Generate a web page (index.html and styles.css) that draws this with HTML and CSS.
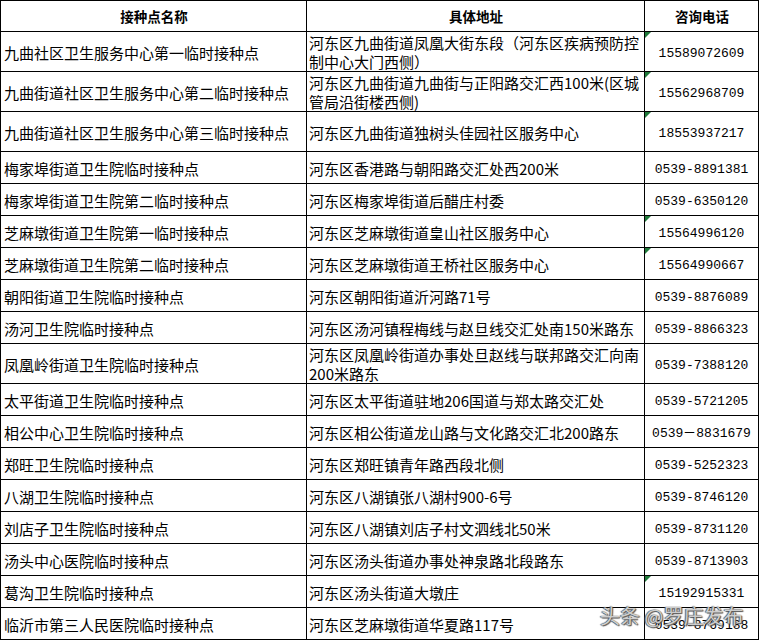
FILE: index.html
```html
<!DOCTYPE html>
<html lang="zh-CN">
<head>
<meta charset="utf-8">
<link rel="stylesheet" href="styles.css">
</head>
<body>
<div class="sheet">
<table class="grid">
<colgroup><col class="c-name"><col class="c-addr"><col class="c-tel"></colgroup>
<thead>
<tr class="head"><th>接种点名称</th><th>具体地址</th><th>咨询电话</th></tr>
</thead>
<tbody>
<tr class="tall"><td>九曲社区卫生服务中心第一临时接种点</td><td class="addr two">河东区九曲街道凤凰大街东段（河东区疾病预防控<br>制中心大门西侧）</td><td class="tel mark">15589072609</td></tr>
<tr class="tall"><td>九曲街道社区卫生服务中心第二临时接种点</td><td class="addr two">河东区九曲街道九曲街与正阳路交汇西100米(区城<br>管局沿街楼西侧)</td><td class="tel mark">15562968709</td></tr>
<tr class="tall"><td>九曲街道社区卫生服务中心第三临时接种点</td><td class="addr">河东区九曲街道独树头佳园社区服务中心</td><td class="tel mark">18553937217</td></tr>
<tr><td>梅家埠街道卫生院临时接种点</td><td class="addr">河东区香港路与朝阳路交汇处西200米</td><td class="tel">0539-8891381</td></tr>
<tr><td>梅家埠街道卫生院第二临时接种点</td><td class="addr">河东区梅家埠街道后醋庄村委</td><td class="tel">0539-6350120</td></tr>
<tr><td>芝麻墩街道卫生院第一临时接种点</td><td class="addr">河东区芝麻墩街道皇山社区服务中心</td><td class="tel mark">15564996120</td></tr>
<tr><td>芝麻墩街道卫生院第二临时接种点</td><td class="addr">河东区芝麻墩街道王桥社区服务中心</td><td class="tel mark">15564990667</td></tr>
<tr><td>朝阳街道卫生院临时接种点</td><td class="addr">河东区朝阳街道沂河路71号</td><td class="tel">0539-8876089</td></tr>
<tr><td>汤河卫生院临时接种点</td><td class="addr">河东区汤河镇程梅线与赵旦线交汇处南150米路东</td><td class="tel">0539-8866323</td></tr>
<tr class="tall"><td>凤凰岭街道卫生院临时接种点</td><td class="addr two">河东区凤凰岭街道办事处旦赵线与联邦路交汇向南<br>200米路东</td><td class="tel">0539-7388120</td></tr>
<tr><td>太平街道卫生院临时接种点</td><td class="addr">河东区太平街道驻地206国道与郑太路交汇处</td><td class="tel">0539-5721205</td></tr>
<tr><td>相公中心卫生院临时接种点</td><td class="addr">河东区相公街道龙山路与文化路交汇北200路东</td><td class="tel">0539－8831679</td></tr>
<tr><td>郑旺卫生院临时接种点</td><td class="addr">河东区郑旺镇青年路西段北侧</td><td class="tel">0539-5252323</td></tr>
<tr><td>八湖卫生院临时接种点</td><td class="addr">河东区八湖镇张八湖村900-6号</td><td class="tel">0539-8746120</td></tr>
<tr><td>刘店子卫生院临时接种点</td><td class="addr">河东区八湖镇刘店子村文泗线北50米</td><td class="tel">0539-8731120</td></tr>
<tr><td>汤头中心医院临时接种点</td><td class="addr">河东区汤头街道办事处神泉路北段路东</td><td class="tel">0539-8713903</td></tr>
<tr><td>葛沟卫生院临时接种点</td><td class="addr">河东区汤头街道大墩庄</td><td class="tel mark">15192915331</td></tr>
<tr><td>临沂市第三人民医院临时接种点</td><td class="addr">河东区芝麻墩街道华夏路117号</td><td class="tel">0539-8769188</td></tr>
</tbody>
</table>
<div class="watermark">头条 @罗庄发布</div>
</div>
</body>
</html>
```
FILE: styles.css
```css
html, body {
  margin: 0;
  padding: 0;
  background: #fff;
}
.sheet {
  position: relative;
  width: 759px;
  height: 641px;
  overflow: hidden;
}
.grid {
  border-collapse: collapse;
  table-layout: fixed;
  width: 758px;
  font-family: "Noto Sans CJK SC", "Liberation Sans", sans-serif;
  font-size: 15px;
  color: #000;
}
.c-name { width: 306px; }
.c-addr { width: 338px; }
.c-tel { width: 114px; }
.grid th,
.grid td {
  border: 1px solid #000;
  padding: 2px 2px 0 3px;
  white-space: nowrap;
  overflow: hidden;
  line-height: 19px;
  vertical-align: middle;
  text-align: left;
}
.grid tr { height: 32px; }
.grid tr.tall { height: 40px; }
.grid tr.head { height: 31px; }
.grid th {
  font-size: 13.5px;
  font-weight: 700;
  text-align: center;
  padding-top: 0;
  line-height: 18px;
}
.grid td.addr { padding-left: 2px; }
.grid td.two {
  padding-top: 0;
  padding-bottom: 0;
  line-height: 19px;
}
.grid td.tel {
  font-family: "Liberation Mono", "DejaVu Sans Mono", monospace;
  font-size: 13px;
  text-align: center;
  padding-left: 0;
  padding-right: 0;
  padding-top: 3px;
  position: relative;
}
.grid td.mark::before {
  content: "";
  position: absolute;
  left: 0;
  top: 0;
  width: 0;
  height: 0;
  border-top: 6px solid #1f7a3a;
  border-right: 6px solid transparent;
}
.watermark {
  position: absolute;
  left: 600px;
  top: 601px;
  font-family: "Noto Sans CJK SC", sans-serif;
  font-size: 20px;
  color: rgba(255, 255, 255, 0.75);
  text-shadow: 0 0 1px #333, 1px 1px 1px #555, -1px 0 1px #666;
  white-space: nowrap;
}
```
